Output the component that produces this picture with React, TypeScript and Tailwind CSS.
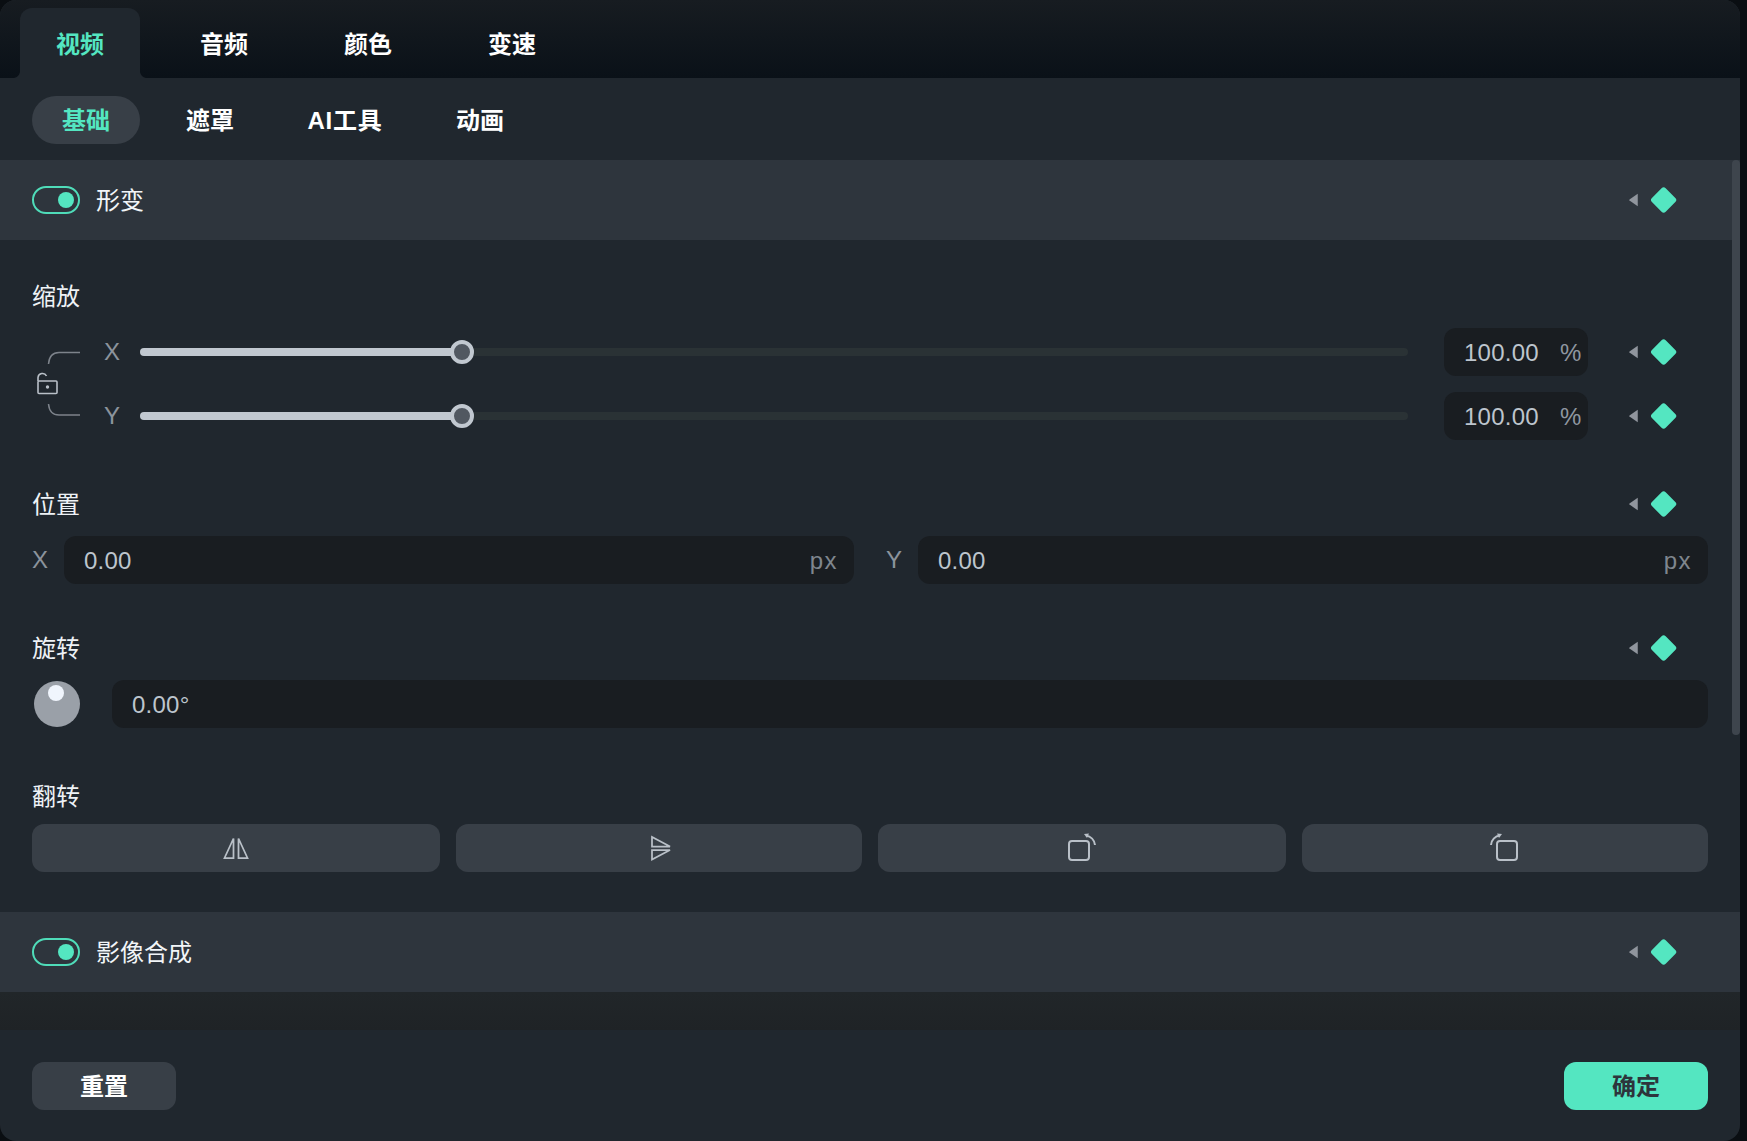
const font = '"Liberation Sans","Noto Sans CJK SC",sans-serif';

function KF() {
  return (
    <div className="flex items-center w-[48px] h-[26px] shrink-0">
      <svg width="9" height="14" viewBox="0 0 9 14" className="block">
        <path d="M9 0.5V13.5L0.5 7.6Q0 7 0.5 6.4Z" fill="#90959d" />
      </svg>
      <svg width="28" height="28" viewBox="0 0 28 28" className="block ml-[12px]">
        <rect x="4" y="4" width="20" height="20" rx="3" transform="rotate(45 14 14)" fill="#54e6c1" />
      </svg>
    </div>
  );
}

function Toggle() {
  return (
    <div className="w-12 h-7 rounded-full border-2 border-[#4fdcb9] flex items-center justify-end pr-1">
      <div className="w-4 h-4 rounded-full bg-[#54e6c1]" />
    </div>
  );
}

function Header({ title }: { title: string }) {
  return (
    <div className="h-20 bg-[#2e353d] flex items-center justify-between pl-8 pr-[63px]">
      <div className="flex items-center gap-4">
        <Toggle />
        <span className="pt-[2px] text-2xl font-normal text-[#f2f5f8]">{title}</span>
      </div>
      <KF />
    </div>
  );
}

function Label({ text, kf }: { text: string; kf?: boolean }) {
  return (
    <div className="h-8 flex items-center justify-between pr-[31px]">
      <span className="pt-[2px] text-2xl leading-8 text-[#eef2f6]">{text}</span>
      {kf && <KF />}
    </div>
  );
}

function SliderRow({ axis }: { axis: string }) {
  return (
    <div className="h-12 flex items-center pl-4">
      <span className="w-9 text-2xl text-[#8b939c]">{axis}</span>
      <div className="relative w-[1268px] h-2 rounded-full bg-[#2a3235]">
        <div className="w-[322px] h-2 rounded-full bg-[#c1c8d0]" />
        <div className="absolute left-[310px] top-[-8px] w-6 h-6 rounded-full border-4 border-[#c1c8d0] bg-[#515861]" />
      </div>
      <div className="ml-9 w-36 h-12 pt-[2px] rounded-xl bg-[#191d21] flex items-center pl-5 text-2xl">
        <span className="text-[#bdc5cd] tracking-[0.25px]">100.00</span>
        <span className="ml-[21px] text-[#8f97a0]">%</span>
      </div>
      <div className="ml-[41px]">
        <KF />
      </div>
    </div>
  );
}

function PosInput({ axis, className }: { axis: string; className: string }) {
  return (
    <div className={`flex items-center ${className}`}>
      <span className="w-8 text-2xl text-[#8b939c]">{axis}</span>
      <div className="flex-1 h-12 pt-[2px] rounded-xl bg-[#191d21] flex items-center justify-between pl-5 pr-[16px] text-2xl">
        <span className="text-[#bdc5cd] tracking-[0.25px]">0.00</span>
        <span className="text-[#7f868e] tracking-[1.5px]">px</span>
      </div>
    </div>
  );
}

function FlipButton({ children }: { children: React.ReactNode }) {
  return <div className="h-12 rounded-xl bg-[#383f47] flex items-center justify-center">{children}</div>;
}

export default function App() {
  const stroke = "#b9c0c8";
  return (
    <div className="w-[1747px] h-[1141px] bg-[#0a0e12] overflow-hidden" style={{ fontFamily: font }}>
      <div className="relative w-[1740px] h-full rounded-2xl overflow-hidden bg-[#20272e] flex flex-col">
        {/* primary tabs */}
        <div className="h-[78px] shrink-0 bg-gradient-to-b from-[#171c21] to-[#0a1118] flex items-end pl-5 gap-6">
          <div className="relative w-[120px] h-[70px] pt-1 rounded-t-xl bg-[#20272e] flex items-center justify-center text-2xl font-bold text-[#54e6c1]">
            视频
            <svg width="6" height="6" viewBox="0 0 6 6" className="absolute bottom-0 left-[-6px]">
              <path d="M6 0V6H0Q5 5 6 0Z" fill="#20272e" />
            </svg>
            <svg width="6" height="6" viewBox="0 0 6 6" className="absolute bottom-0 right-[-6px]">
              <path d="M0 0V6H6Q1 5 0 0Z" fill="#20272e" />
            </svg>
          </div>
          {["音频", "颜色", "变速"].map((t) => (
            <div key={t} className="w-[120px] h-[70px] pt-1 flex items-center justify-center text-2xl font-bold text-white">
              {t}
            </div>
          ))}
        </div>

        {/* secondary tabs */}
        <div className="shrink-0 flex gap-4 pl-8 pt-[18px] pb-4">
          <div className="h-12 px-[30px] pt-[2px] rounded-full bg-[#383f47] flex items-center text-2xl font-bold text-[#54e6c1]">基础</div>
          <div className="h-12 px-[30px] pt-[2px] flex items-center text-2xl font-bold text-white">遮罩</div>
          <div className="w-[130px] h-12 pt-[2px] flex items-center justify-center text-2xl font-bold text-white tracking-[0.75px]">AI工具</div>
          <div className="h-12 px-[30px] pt-[2px] flex items-center text-2xl font-bold text-white">动画</div>
        </div>

        {/* body */}
        <Header title="形变" />
        <div className="pl-8 pr-8 pt-10 pb-10">
          <Label text="缩放" />
          <div className="flex mt-4">
            <svg width="56" height="112" viewBox="0 0 56 112" fill="none" className="block shrink-0">
              <path d="M48 24.5H27Q17.5 24.5 16.5 36" stroke="#7d838b" strokeWidth="1.5" />
              <path d="M16.5 76Q17.5 87 27 87H48" stroke="#7d838b" strokeWidth="1.5" />
              <rect x="6" y="53" width="19" height="12.5" rx="1" stroke={stroke} strokeWidth="1.6" />
              <path d="M6 53V49.5A4.5 4.5 0 0 1 14.5 48" stroke={stroke} strokeWidth="1.6" />
              <circle cx="15.5" cy="59" r="1.7" fill={stroke} />
            </svg>
            <div className="flex flex-col gap-4">
              <SliderRow axis="X" />
              <SliderRow axis="Y" />
            </div>
          </div>

          <div className="mt-12">
            <Label text="位置" kf />
          </div>
          <div className="flex mt-4 gap-8">
            <PosInput axis="X" className="flex-1" />
            <PosInput axis="Y" className="flex-1" />
          </div>

          <div className="mt-12">
            <Label text="旋转" kf />
          </div>
          <div className="flex items-center mt-4">
            <div className="relative w-[46px] h-[46px] rounded-full bg-[#9aa0a8] ml-[2px] shrink-0">
              <div className="absolute left-[14px] top-[4px] w-4 h-4 rounded-full bg-[#f0f5fd]" />
            </div>
            <div className="ml-8 flex-1 h-12 pt-[2px] rounded-xl bg-[#191d21] flex items-center pl-5 text-2xl text-[#bdc5cd] tracking-[0.25px]">0.00°</div>
          </div>

          <div className="mt-[52px]">
            <Label text="翻转" />
          </div>
          <div className="grid grid-cols-[408px_406px_408px_406px] gap-4 mt-3">
            <FlipButton>
              <svg width="28" height="24" viewBox="0 0 28 24" fill="none" stroke={stroke} strokeWidth="1.75">
                <path d="M11.5 2.5V22H2.5Z" />
                <path d="M16.5 2.5V22H25.5Z" />
              </svg>
            </FlipButton>
            <FlipButton>
              <svg width="22" height="28" viewBox="0 0 22 28" fill="none" stroke={stroke} strokeWidth="1.75" className="ml-[3px]">
                <path d="M2 3V12.5H20Z" />
                <path d="M2 25.5V16H20Z" />
              </svg>
            </FlipButton>
            <FlipButton>
              <svg width="30" height="30" viewBox="0 0 30 30" fill="none">
                <rect x="2" y="8" width="20" height="19" rx="3" stroke={stroke} strokeWidth="2" />
                <path d="M19 2.5A11 11 0 0 1 28 12" stroke={stroke} strokeWidth="2" />
                <path d="M17 1L22 0.5L20 5Z" fill={stroke} />
              </svg>
            </FlipButton>
            <FlipButton>
              <svg width="30" height="30" viewBox="0 0 30 30" fill="none" className="mr-[2px]">
                <rect x="8" y="8" width="20" height="19" rx="3" stroke={stroke} strokeWidth="2" />
                <path d="M2 12A10 10 0 0 1 11 2.5" stroke={stroke} strokeWidth="2" />
                <path d="M13 1L8 0.5L10 5Z" fill={stroke} />
              </svg>
            </FlipButton>
          </div>
        </div>
        <Header title="影像合成" />
        <div className="h-[38px] shrink-0 bg-gradient-to-b from-[#212629] to-[#1f2326]" />

        {/* footer */}
        <div className="flex-1 flex justify-between items-start pl-8 pr-8 pt-8">
          <div className="w-36 h-12 pt-[2px] rounded-xl bg-[#383f47] flex items-center justify-center text-2xl font-bold text-white">重置</div>
          <div className="w-36 h-12 pt-[2px] rounded-xl bg-[#54e6c1] flex items-center justify-center text-2xl font-bold text-[#2d353c]">确定</div>
        </div>

        {/* scrollbar */}
        <div className="absolute right-0 top-[160px] w-2 h-[575px] rounded-[4px] bg-[#3e454d]" />
      </div>
    </div>
  );
}
